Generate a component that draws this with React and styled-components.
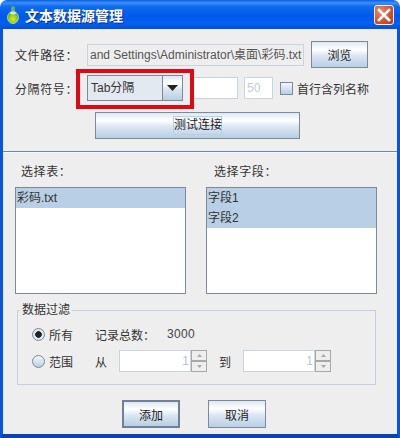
import React from "react";
import styled, { createGlobalStyle } from "styled-components";

const GlobalStyle = createGlobalStyle`
	html, body {
		margin: 0;
		padding: 0;
		background: #fff;
	}
	body {
		font-family: "Liberation Sans", "Noto Sans CJK SC", sans-serif;
		font-size: 12px;
		color: #333;
	}
`;

const oceanGradient = "linear-gradient(180deg, #dde8f3 0%, #ffffff 30%, #dbe6f1 55%, #b8cfe5 100%)";

const OrbIcon = () => (
	<svg width="12" height="18" viewBox="0 0 12 18">
		<defs>
			<radialGradient id="orb" cx="50%" cy="62%" r="55%">
				<stop offset="0%" stopColor="#d8f020" />
				<stop offset="70%" stopColor="#8cc810" />
				<stop offset="100%" stopColor="#4c9a20" />
			</radialGradient>
		</defs>
		<path d="M4.5 0.5 L7.5 0.5 L8 5 L4 5 Z" fill="#6fb070" />
		<ellipse cx="6" cy="11.5" rx="5.5" ry="6" fill="url(#orb)" stroke="#c8e0d8" strokeWidth="0.8" />
		<ellipse cx="6" cy="7.2" rx="3" ry="1.4" fill="#e8f8e0" opacity="0.85" />
	</svg>
);

const SpinnerField = () => (
	<Spinner>
		<SpinnerValue>1</SpinnerValue>
		<SpinnerButtons>
			<SpinnerButton>
				<svg width="5" height="3" viewBox="0 0 5 3"><path d="M0 3 L2.5 0 L5 3 Z" fill="#aaa" /></svg>
			</SpinnerButton>
			<SpinnerButton>
				<svg width="5" height="3" viewBox="0 0 5 3"><path d="M0 0 L2.5 3 L5 0 Z" fill="#aaa" /></svg>
			</SpinnerButton>
		</SpinnerButtons>
	</Spinner>
);

const App = () => {
	return (
		<Window>
			<GlobalStyle />
			<TitleBar>
				<OrbIcon />
				<TitleText>文本数据源管理</TitleText>
				<CloseButton>
					<svg width="14" height="14" viewBox="0 0 14 14">
						<path d="M2 2 L12 12 M12 2 L2 12" stroke="#fff" strokeWidth="2.6" strokeLinecap="square" />
					</svg>
				</CloseButton>
			</TitleBar>
			<Content>
				<TopSection>
					<Row $height={27}>
						<FieldLabel>文件路径：</FieldLabel>
						<PathInput>and Settings\Administrator\桌面\彩码.txt</PathInput>
						<Button $width={57} $height={27}>浏览</Button>
					</Row>
					<Row $height={26}>
						<FieldLabel>分隔符号：</FieldLabel>
						<ComboWrap>
							<Combo>
								<ComboValue>Tab分隔</ComboValue>
								<ComboArrow>
									<svg width="11" height="6" viewBox="0 0 11 6">
										<path d="M0 0 H11 L5.5 6 Z" fill="#222" />
									</svg>
								</ComboArrow>
							</Combo>
							<Highlight />
						</ComboWrap>
						<SmallInput $width={45} />
						<SmallInput $width={29}>50</SmallInput>
						<CheckBox />
						<CheckLabel>首行含列名称</CheckLabel>
					</Row>
					<TestRow>
						<Button $width={205} $height={27}>
							<FocusLabel>测试连接</FocusLabel>
						</Button>
					</TestRow>
				</TopSection>
				<Separator />
				<ListsSection>
					<ListColumn>
						<ListLabel $indent={6}>选择表：</ListLabel>
						<ListBox>
							<ListItem>彩码.txt</ListItem>
						</ListBox>
					</ListColumn>
					<ListColumn>
						<ListLabel $indent={8}>选择字段：</ListLabel>
						<ListBox>
							<ListItem>字段1</ListItem>
							<ListItem>字段2</ListItem>
						</ListBox>
					</ListColumn>
				</ListsSection>
				<FilterGroup>
					<Legend>数据过滤</Legend>
					<FilterRow>
						<Radio $checked />
						<RadioLabel>所有</RadioLabel>
						<span>记录总数：</span>
						<CountValue>3000</CountValue>
					</FilterRow>
					<FilterRow>
						<Radio />
						<RadioLabel>范围</RadioLabel>
						<RangeLabel>从</RangeLabel>
						<SpinnerField />
						<RangeLabel $left={12}>到</RangeLabel>
						<SpinnerField />
					</FilterRow>
				</FilterGroup>
				<Footer>
					<Button $width={58} $height={28} $default>添加</Button>
					<Button $width={58} $height={28}>取消</Button>
				</Footer>
			</Content>
		</Window>
	);
};

export default App;

const Window = styled.div`
	width: 400px;
	height: 438px;
	display: flex;
	flex-direction: column;
	overflow: hidden;
`;

const TitleBar = styled.div`
	height: 29px;
	flex: none;
	display: flex;
	align-items: center;
	padding: 0 6px 0 7px;
	box-sizing: border-box;
	border-radius: 7px 7px 0 0;
	background: linear-gradient(180deg, #0a5ee0 0%, #3c90fa 10%, #0f6cf0 22%, #0058e8 55%, #0360f0 80%, #0350d8 100%);
`;

const TitleText = styled.div`
	margin-left: 6px;
	flex: 1;
	font-size: 14px;
	font-weight: 700;
	color: #fff;
	text-shadow: 1px 1px 0 #0a2f90;
`;

const CloseButton = styled.div`
	width: 20px;
	height: 20px;
	display: flex;
	align-items: center;
	justify-content: center;
	box-sizing: border-box;
	border: 1px solid #f4f0ee;
	border-radius: 3px;
	background: radial-gradient(circle at 30% 30%, #e88a70, #d0502c 60%, #b83c18);
`;

const Content = styled.div`
	flex: 1;
	display: flex;
	flex-direction: column;
	box-sizing: border-box;
	background: #eeeeee;
	border-left: 3px solid #0a55e0;
	border-right: 3px solid #0a55e0;
	border-bottom: 4px solid #0a40b8;
`;

const TopSection = styled.div`
	display: flex;
	flex-direction: column;
	gap: 7px;
	padding: 12px 0 0 12px;
`;

const Row = styled.div`
	display: flex;
	align-items: center;
	height: ${({ $height }) => $height}px;
`;

const FieldLabel = styled.div`
	width: 72px;
	flex: none;
	letter-spacing: 0.6px;
`;

const PathInput = styled.div`
	width: 217px;
	height: 22px;
	margin-right: 7px;
	box-sizing: border-box;
	border: 1px solid #c8d4e0;
	background: #eeeeee;
	color: #555;
	line-height: 20px;
	padding-left: 2px;
	white-space: nowrap;
	overflow: hidden;
`;

const Button = styled.div`
	width: ${({ $width }) => $width}px;
	height: ${({ $height }) => $height}px;
	box-sizing: border-box;
	display: flex;
	align-items: center;
	justify-content: center;
	border: ${({ $default }) => ($default ? "2px solid #6f8194" : "1px solid #7a8a99")};
	background: ${oceanGradient};
	color: #222;
`;

const ComboWrap = styled.div`
	position: relative;
	margin-right: 10px;
`;

const Combo = styled.div`
	width: 96px;
	height: 26px;
	box-sizing: border-box;
	display: flex;
	border: 1px solid #7a8a99;
	background: #e3e9f0;
`;

const ComboValue = styled.div`
	flex: 1;
	padding-left: 3px;
	line-height: 24px;
	color: #333;
	border-right: 1px solid #7a8a99;
`;

const ComboArrow = styled.div`
	width: 19px;
	display: flex;
	align-items: center;
	justify-content: center;
	background: ${oceanGradient};
`;

const Highlight = styled.div`
	position: absolute;
	left: -11px;
	top: -6px;
	width: 118px;
	height: 40px;
	box-sizing: border-box;
	border: 4px solid #e00814;
	pointer-events: none;
`;

const SmallInput = styled.div`
	width: ${({ $width }) => $width}px;
	height: 22px;
	margin-right: 6px;
	box-sizing: border-box;
	border: 1px solid #c8d4e0;
	background: #fff;
	color: #c0ccd8;
	line-height: 20px;
	padding-left: 2px;
`;

const CheckBox = styled.div`
	width: 13px;
	height: 13px;
	margin-left: 1px;
	box-sizing: border-box;
	border: 1px solid #7a8a99;
	background: linear-gradient(180deg, #f4f7fa, #b8cfe5);
`;

const CheckLabel = styled.div`
	margin-left: 4px;
	white-space: nowrap;
`;

const TestRow = styled.div`
	padding-left: 80px;
	margin-top: 4px;
`;

const FocusLabel = styled.div`
	width: 49px;
	height: 19px;
	box-sizing: border-box;
	border: 1px solid #b8cfe5;
	line-height: 17px;
	text-align: center;
	white-space: nowrap;
`;

const Separator = styled.div`
	height: 1px;
	margin-top: 12px;
	background: #6d86b0;
	border-bottom: 1px solid #f8f8f8;
`;

const ListsSection = styled.div`
	display: flex;
	gap: 20px;
	padding: 10px 0 0 12px;
`;

const ListColumn = styled.div`
	display: flex;
	flex-direction: column;
`;

const ListLabel = styled.div`
	height: 24px;
	padding-left: ${({ $indent }) => $indent}px;
	letter-spacing: 0.6px;
	line-height: 18px;
`;

const ListBox = styled.div`
	width: 171px;
	height: 107px;
	box-sizing: border-box;
	border: 1px solid #7a8a99;
	background: #fff;
`;

const ListItem = styled.div`
	height: 20px;
	line-height: 20px;
	padding-left: 1px;
	background: #b8cfe5;
	color: #333;
`;

const FilterGroup = styled.div`
	position: relative;
	width: 359px;
	height: 75px;
	margin: 16px 0 0 14px;
	box-sizing: border-box;
	border: 1px solid #c4d0e0;
	padding: 12px 0 0 14px;
	display: flex;
	flex-direction: column;
	gap: 5px;
`;

const Legend = styled.div`
	position: absolute;
	left: 2px;
	top: -10px;
	padding: 0 2px;
	background: #eeeeee;
	line-height: 18px;
`;

const FilterRow = styled.div`
	display: flex;
	align-items: center;
	height: 22px;
`;

const Radio = styled.div`
	width: 13px;
	height: 13px;
	box-sizing: border-box;
	border-radius: 50%;
	border: 1px solid #7a8a99;
	background: ${({ $checked }) =>
		$checked
			? "radial-gradient(circle, #222 0 3px, #dbe6f1 3.5px)"
			: "linear-gradient(180deg, #f4f7fa, #b8cfe5)"};
`;

const RadioLabel = styled.div`
	width: 46px;
	margin-left: 4px;
`;

const CountValue = styled.div`
	margin-left: 12px;
	color: #444;
	letter-spacing: 0.3px;
`;

const RangeLabel = styled.div`
	width: 24px;
	margin-left: ${({ $left }) => $left || 0}px;
`;

const Spinner = styled.div`
	display: flex;
	height: 22px;
`;

const SpinnerValue = styled.div`
	width: 72px;
	box-sizing: border-box;
	border: 1px solid #c8d4e0;
	background: #fff;
	color: #b8c4d0;
	line-height: 20px;
	text-align: right;
	padding-right: 1px;
`;

const SpinnerButtons = styled.div`
	width: 16px;
	display: flex;
	flex-direction: column;
`;

const SpinnerButton = styled.div`
	flex: 1;
	display: flex;
	align-items: center;
	justify-content: center;
	box-sizing: border-box;
	border: 1px solid #a8a8a8;
	background: #eeeeee;
`;

const Footer = styled.div`
	display: flex;
	gap: 28px;
	padding: 15px 0 0 119px;
`;
